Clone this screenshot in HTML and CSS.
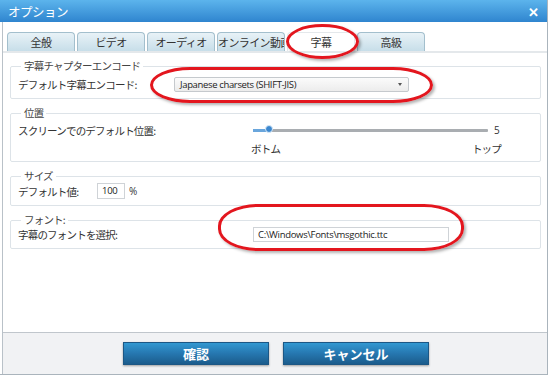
FILE: index.html
```html
<!DOCTYPE html>
<html lang="ja">
<head>
    <meta charset="UTF-8">
    <title>オプション</title>
    <link rel="stylesheet" href="styles.css">
</head>
<body>
    <div class="window">
        <!-- title bar -->
        <div class="titlebar">
            <span class="title">オプション</span>
            <span class="close">✕</span>
        </div>

        <div class="main">
            <div class="tabs">
                <div class="tab">全般</div>
                <div class="tab">ビデオ</div>
                <div class="tab">オーディオ</div>
                <div class="tab">オンライン動画</div>
                <div class="tab active">字幕</div>
                <div class="tab">高級</div>
            </div>

            <div class="panel">
                <fieldset class="group g-encode">
                    <legend>字幕チャプターエンコード</legend>
                    <div class="row">
                        <span class="label w-encode">デフォルト字幕エンコード:</span>
                        <div class="select">
                            <span>Japanese charsets (SHIFT-JIS)</span>
                            <span class="arrow"></span>
                        </div>
                    </div>
                </fieldset>

                <fieldset class="group g-pos">
                    <legend>位置</legend>
                    <div class="row">
                        <span class="label w-wide">スクリーンでのデフォルト位置:</span>
                        <div class="slider">
                            <div class="track">
                                <div class="fill"></div>
                                <div class="thumb"></div>
                            </div>
                            <span class="max">5</span>
                        </div>
                    </div>
                    <div class="row ticks">
                        <span>ボトム</span>
                        <span>トップ</span>
                    </div>
                </fieldset>

                <fieldset class="group g-size">
                    <legend>サイズ</legend>
                    <div class="row">
                        <span class="label w-size">デフォルト値:</span>
                        <div class="input num">100</div>
                        <span class="unit">%</span>
                    </div>
                </fieldset>

                <fieldset class="group g-font">
                    <legend>フォント:</legend>
                    <div class="row">
                        <span class="label w-wide">字幕のフォントを選択:</span>
                        <div class="input path">C:\Windows\Fonts\msgothic.ttc</div>
                    </div>
                </fieldset>
            </div>

            <div class="footer">
                <button class="btn">確認</button>
                <button class="btn">キャンセル</button>
            </div>
        </div>

        <!-- red annotation marks -->
        <div class="mark mark-tab"></div>
        <div class="mark mark-select"></div>
        <div class="mark mark-font"></div>
    </div>
</body>
</html>
```

FILE: styles.css
```css
/* styles.css */
body {
margin: 0;
background-color: #ffffff;
font-family: "Noto Sans CJK JP", "Noto Sans", sans-serif;
color: #333333;
}

.window {
position: relative;
width: 548px;
height: 375px;
border-right: 1px solid #aab4bc;
border-bottom: 1px solid #aab4bc;
box-sizing: border-box;
display: flex;
flex-direction: column;
}

.titlebar {
height: 22px;
background: linear-gradient(#5cb4ec, #2f85cf);
display: flex;
align-items: center;
justify-content: space-between;
padding: 0 8px;
color: white;
}

.title {
font-size: 12.5px;
letter-spacing: -0.5px;
}

.close {
font-size: 13px;
font-weight: bold;
}

.main {
flex: 1;
display: flex;
flex-direction: column;
border-left: 1px solid #b9c1c8;
margin-left: 2px;
}

.tabs {
display: flex;
gap: 2px;
padding: 10px 0 0 4px;
border-bottom: 2px solid #e4e8eb;
}

.tab {
width: 68px;
height: 19px;
box-sizing: border-box;
border: 1px solid #a3bfcd;
border-bottom: none;
border-radius: 4px 4px 0 0;
background: linear-gradient(#e8f2f7, #c7dee9);
font-size: 11px;
line-height: 18px;
text-align: center;
white-space: nowrap;
overflow: hidden;
letter-spacing: -0.6px;
}

.tab.active {
background: #ffffff;
border-color: #e4e8eb;
}

.panel {
flex: 1;
padding: 6px 6px 0 7px;
}

.group {
margin: 0 0 7px 0;
padding: 0 7px 6px 7px;
border: 1px solid #dde3e8;
border-radius: 2px;
}

.group legend {
padding: 0 3px;
margin-left: 3px;
font-size: 10.5px;
line-height: 14px;
letter-spacing: -0.8px;
color: #444;
}

.row {
display: flex;
align-items: center;
font-size: 10.5px;
letter-spacing: -0.8px;
}

.g-encode .row {
padding-top: 4px;
}

.g-pos .row:first-of-type {
padding-top: 3px;
height: 14px;
}

.g-size {
padding-bottom: 6px;
}

.g-font {
padding-top: 0;
}

.label {
flex-shrink: 0;
}

.w-encode {
width: 156px;
}

.w-wide {
width: 235px;
}

.w-size {
width: 79px;
}

.select {
width: 235px;
height: 15px;
box-sizing: border-box;
border: 1px solid #c5c9cd;
border-radius: 2px;
background: linear-gradient(#fbfbfb, #ececec);
display: flex;
align-items: center;
justify-content: space-between;
padding: 0 6px 0 5px;
font-family: "Open Sans", sans-serif;
font-size: 9.5px;
letter-spacing: -0.35px;
color: #222;
}

.arrow {
width: 0;
height: 0;
border-left: 2.5px solid transparent;
border-right: 2.5px solid transparent;
border-top: 3px solid #555;
}

.slider {
display: flex;
align-items: center;
gap: 6px;
}

.track {
position: relative;
width: 235px;
height: 3px;
background: #a9adb1;
border-radius: 1px;
}

.fill {
width: 14px;
height: 3px;
background: #6aa6dc;
}

.thumb {
position: absolute;
left: 12px;
top: -3px;
width: 6px;
height: 6px;
border-radius: 50%;
background: #3b87cf;
border: 1.5px solid #d8e9f7;
box-sizing: content-box;
margin-top: -1px;
}

.max {
font-family: "Open Sans", sans-serif;
font-size: 10px;
}

.ticks {
margin-top: 4px;
padding-left: 233px;
width: 250px;
justify-content: space-between;
height: 14px;
}

.input {
height: 16px;
box-sizing: border-box;
border: 1px solid #cfd3d7;
background: white;
font-family: "Open Sans", sans-serif;
font-size: 9.5px;
letter-spacing: -0.3px;
line-height: 14px;
padding-left: 4px;
color: #222;
}

.num {
width: 28px;
}

.unit {
margin-left: 4px;
font-family: "Open Sans", sans-serif;
font-size: 10px;
}

.path {
width: 196px;
height: 15px;
}

.footer {
height: 42px;
box-sizing: border-box;
border-top: 1px solid #c0c6cc;
background: #f1f2f4;
display: flex;
gap: 14px;
padding: 9px 0 0 120px;
}

.btn {
width: 146px;
height: 23px;
border: 1px solid #1c5785;
background: linear-gradient(#3298d1, #2677b0 50%, #1b5c8c);
color: white;
font-family: "Noto Sans CJK JP", sans-serif;
font-size: 13px;
font-weight: bold;
box-shadow: 0 1px 2px rgba(0, 0, 0, 0.35);
padding: 0;
line-height: 20px;
}

.mark {
position: absolute;
border: 3px solid #e3161e;
box-shadow: 2px 2px 3px rgba(0, 0, 0, 0.3);
box-sizing: border-box;
}

.mark-tab {
left: 286px;
top: 24px;
width: 73px;
height: 35px;
border-radius: 50%;
}

.mark-select {
left: 150px;
top: 67px;
width: 283px;
height: 36px;
border-radius: 40px / 18px;
}

.mark-font {
left: 218px;
top: 204px;
width: 246px;
height: 47px;
border-radius: 40px / 22px;
}
```
